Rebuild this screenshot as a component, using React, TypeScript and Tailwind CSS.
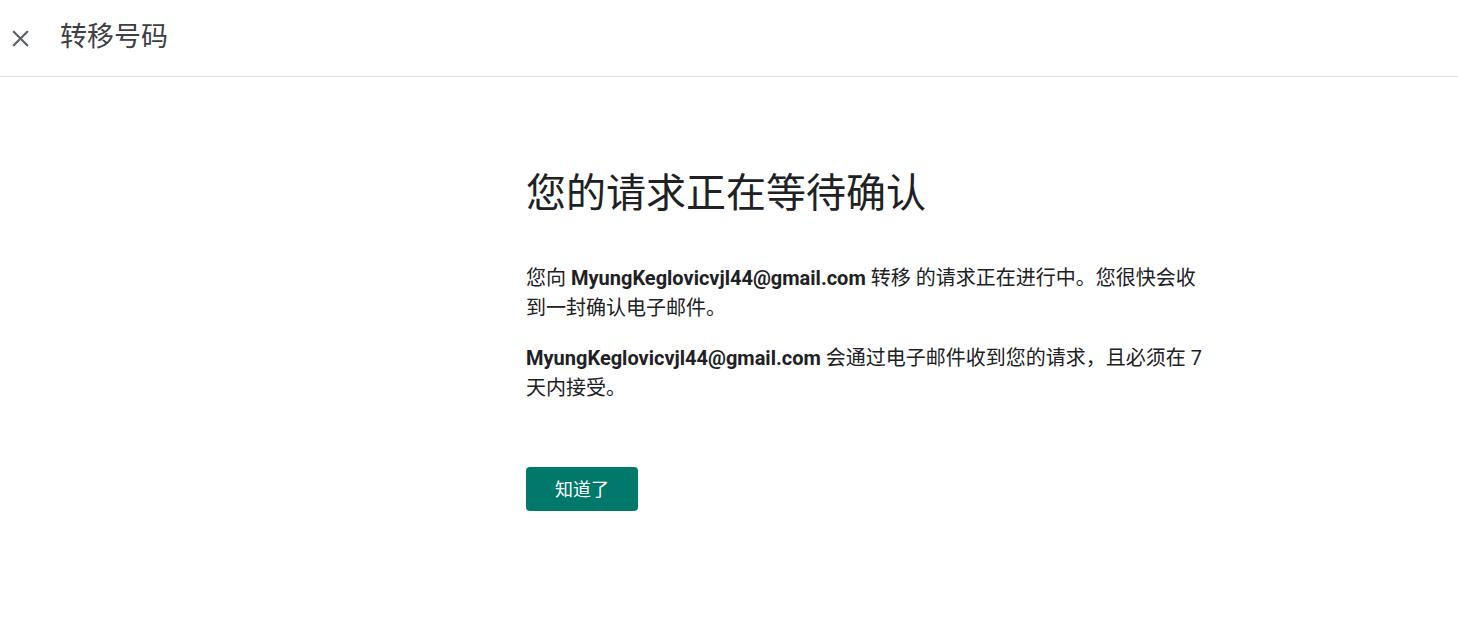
import { X } from "lucide-react";

const font = { fontFamily: '"Roboto", "Noto Sans CJK SC", sans-serif' };

function App() {
  return (
    <div className="min-h-screen bg-white text-[#202124]" style={font}>
      <header className="h-[77px] flex items-center border-b border-[#e0e0e0]">
        <button className="w-10 h-10 flex items-center justify-center text-[#5f6368]">
          <X size={27} strokeWidth={2} />
        </button>
        <h1 className="ml-5 -mt-[2px] text-[27px] text-[#3c4043] font-normal">转移号码</h1>
      </header>
      <main className="pl-[526px] pt-[89px]">
        <div className="w-[686px]">
          <h2 className="text-[40px] leading-[56px] font-normal text-[#202124]">
            您的请求正在等待确认
          </h2>
          <p className="mt-[41px] text-[20px] leading-[30px]">
            您向 <b className="font-bold">MyungKeglovicvjl44@gmail.com</b> 转移 的请求正在进行中。您很快会收到一封确认电子邮件。
          </p>
          <p className="mt-[20px] text-[20px] leading-[30px]">
            <b className="font-bold">MyungKeglovicvjl44@gmail.com</b> 会通过电子邮件收到您的请求，且必须在 7 天内接受。
          </p>
          <button className="mt-[64px] w-[112px] h-[44px] rounded bg-[#00796b] text-white text-[18px]">
            知道了
          </button>
        </div>
      </main>
    </div>
  );
}

export default App;
